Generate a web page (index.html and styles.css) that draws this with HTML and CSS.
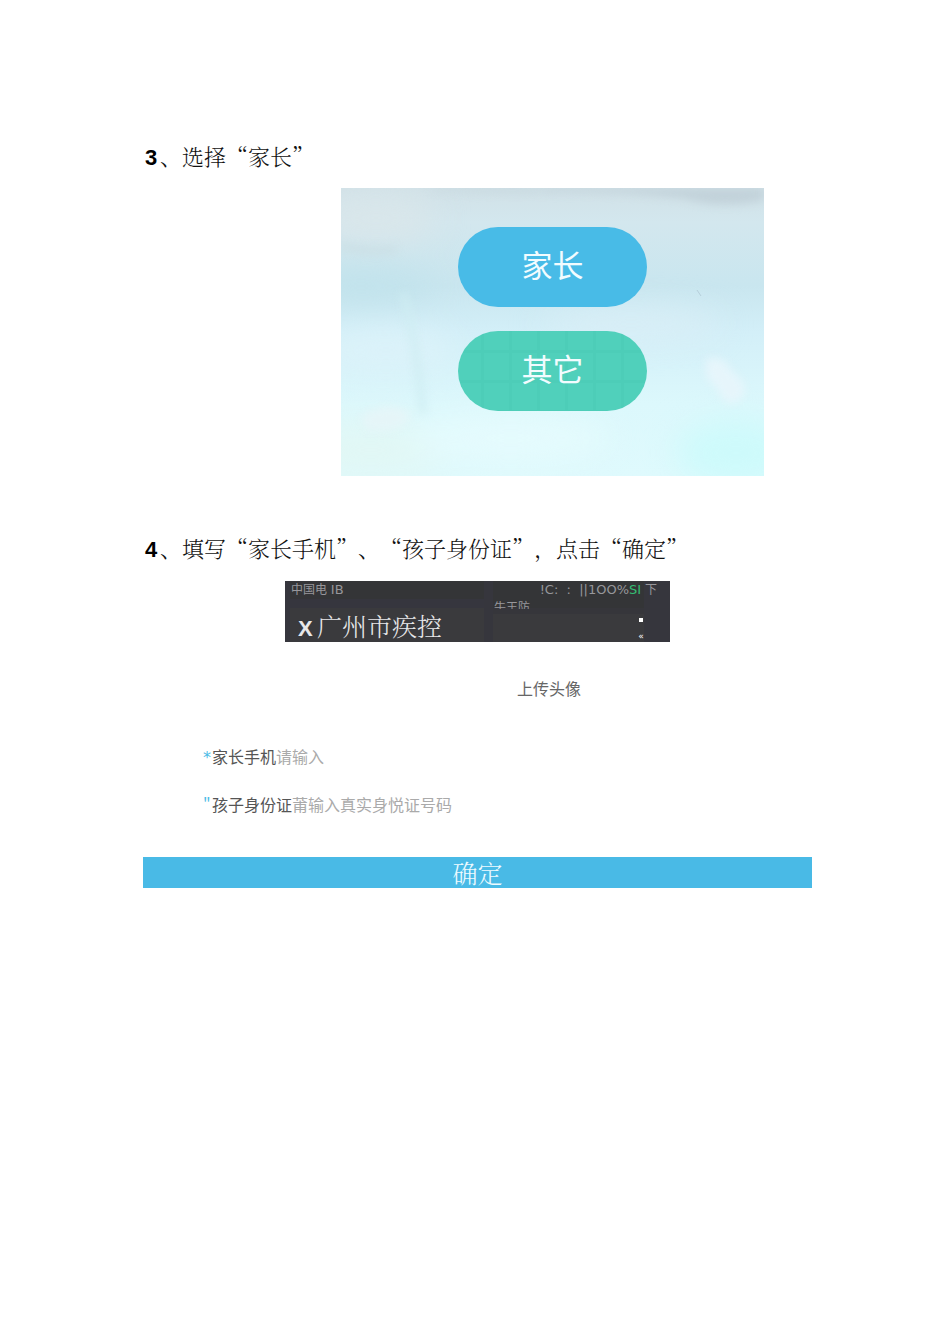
FILE: index.html
```html
<!DOCTYPE html>
<html lang="zh-CN">
<head>
<meta charset="utf-8">
<meta name="viewport" content="width=device-width, initial-scale=1">
<title>填写家长信息</title>
<link rel="stylesheet" href="styles.css">
</head>
<body>
<main class="page">
  <section class="step">
    <h2 class="step-title"><b class="num">3</b>、选择“家长”</h2>
    <div class="roles">
      <svg class="sky" viewBox="0 0 423 288" preserveAspectRatio="none" aria-hidden="true">
        <defs>
          <linearGradient id="air" x1="0" y1="0" x2="0" y2="1">
            <stop offset="0" stop-color="#d1e1e7"/>
            <stop offset=".12" stop-color="#d3e7ee"/>
            <stop offset=".34" stop-color="#c9e6ef"/>
            <stop offset=".5" stop-color="#d3eff8"/>
            <stop offset=".75" stop-color="#dcf8fc"/>
            <stop offset="1" stop-color="#dffafd"/>
          </linearGradient>
          <filter id="soft" x="-50%" y="-50%" width="200%" height="200%" color-interpolation-filters="sRGB"><feGaussianBlur stdDeviation="16"/></filter>
          <filter id="mist" x="-50%" y="-50%" width="200%" height="200%" color-interpolation-filters="sRGB"><feGaussianBlur stdDeviation="4"/></filter>
        </defs>
        <rect width="423" height="288" fill="url(#air)"/>
        <g filter="url(#soft)">
          <ellipse cx="35" cy="30" rx="60" ry="24" fill="#d9e6ea"/>
          <ellipse cx="20" cy="98" rx="75" ry="16" fill="#c0e2eb"/>
          <ellipse cx="45" cy="162" rx="70" ry="20" fill="#dcf2f9"/>
          <ellipse cx="30" cy="262" rx="80" ry="30" fill="#e1f7f5"/>
          <ellipse cx="170" cy="250" rx="100" ry="24" fill="#e5fbfd"/>
          <ellipse cx="290" cy="136" rx="90" ry="14" fill="#daeef6"/>
          <ellipse cx="395" cy="265" rx="60" ry="34" fill="#cdfafb"/>
        </g>
        <g filter="url(#mist)">
          <path d="M90 0H240V3Q170 7 90 2Z" fill="#c6d7de"/>
          <path d="M205 0H423V12Q380 22 342 10Q280 3 205 4Z" fill="#c2d2da"/>
          <path d="M62 105Q75 150 82 225" fill="none" stroke="#cfedf2" stroke-width="6"/>
          <path d="M0 58Q38 66 55 60" fill="none" stroke="#c9dde3" stroke-width="5"/>
          <path d="M366 170Q385 168 390 183Q410 197 401 210Q386 224 376 200Q361 190 366 170Z" fill="#e6f5fb"/>
          <path d="M20 228Q55 209 70 229Q55 249 25 241Z" fill="#e5f5f8"/>
        </g>
        <path d="M356 102l4 6" stroke="#b6cfda" stroke-width="1"/>
      </svg>
      <button class="role parent" type="button">家长</button>
      <button class="role other" type="button">其它</button>
    </div>
  </section>

  <section class="step">
    <h2 class="step-title"><b class="num">4</b>、填写“家长手机”、“孩子身份证”，点击“确定”</h2>
    <header class="phone-bar">
      <div class="bar-left">
        <span class="carrier">中国电 <span class="latin">IB</span></span>
        <span class="bar-title"><b class="close">X</b>广州市疾控</span>
      </div>
      <div class="bar-right">
        <div class="status"><span class="signal">!C:&nbsp; :&nbsp; ||1OO%<span class="battery">SI</span></span> 下</div>
        <div class="clipped">牛王防</div>
        <div class="menu"><span class="dot"></span><span class="chevron">«</span></div>
      </div>
    </header>

    <form class="form">
      <button class="upload" type="button">上传头像</button>
      <div class="field">
        <label for="phone"><span class="mark star">*</span>家长手机</label>
        <input id="phone" type="tel" placeholder="请输入">
      </div>
      <div class="field">
        <label for="child-id"><span class="mark">"</span>孩子身份证</label>
        <input id="child-id" type="text" placeholder="莆输入真实身悦证号码">
      </div>
      <button class="submit" type="submit">确定</button>
    </form>
  </section>
</main>
</body>
</html>
```
FILE: styles.css
```css
* {
  box-sizing: border-box;
}

body {
  margin: 0;
  background: #fff;
  color: #111;
  font-family: "Liberation Sans", "Noto Sans CJK SC", sans-serif;
}

button,
input {
  margin: 0;
  padding: 0;
  border: 0;
  background: none;
  font: inherit;
}

.page {
  width: 100%;
  padding: 140px 138px 140px 143px;
}

.step-title {
  margin: 0;
  font-family: "Noto Serif CJK SC", "Noto Sans CJK SC", serif;
  font-size: 22px;
  font-weight: 300;
  line-height: 32px;
  text-spacing-trim: space-all;
}

.num {
  display: inline-block;
  width: 17px;
  padding-left: 2px;
  color: #000;
  font-family: "Liberation Sans", sans-serif;
  font-weight: 700;
}

.roles {
  position: relative;
  display: flex;
  flex-direction: column;
  align-items: center;
  gap: 24px;
  width: 423px;
  max-width: 100%;
  margin: 14px 48px 56px auto;
  padding: 39px 0 65px;
}

.sky {
  position: absolute;
  inset: 0;
  width: 100%;
  height: 100%;
}

.role {
  position: relative;
  width: 189px;
  height: 80px;
  padding-bottom: 6px;
  border-radius: 40px;
  color: #f2fcff;
  font-family: "Noto Sans CJK SC", sans-serif;
  font-size: 31px;
  line-height: 40px;
}

.parent {
  background: #48bbe7;
}

.other {
  background-color: #50d0bb;
  background-image:
    linear-gradient(90deg, #4dcdb8 3px, transparent 3px),
    linear-gradient(#4dcdb8 3px, transparent 3px);
  background-position: 23px 19px;
  background-size: 28px 30px;
}

.phone-bar {
  display: flex;
  width: 385px;
  max-width: 100%;
  height: 61px;
  margin: 15px auto 0 142px;
  background: #36363d;
  color: #97979b;
  font-family: "DejaVu Sans", "Noto Sans CJK SC", sans-serif;
  font-size: 12px;
  line-height: 18px;
}

.bar-left {
  display: flex;
  flex-direction: column;
  width: 204px;
  padding-left: 6px;
  background: linear-gradient(#343537 18px, #36363e 18px 27px, #3a3a3d 27px) 5px 0 / 194px 100% no-repeat;
}

.latin,
.signal {
  font-size: 13px;
}

.bar-title {
  padding: 8px 0 0 7px;
  color: #e8e8ea;
  font-family: "Noto Serif CJK SC", "Noto Sans CJK SC", serif;
  font-size: 25px;
  font-weight: 300;
  line-height: 36px;
}

.close {
  display: inline-block;
  width: 19px;
  font-family: "Liberation Sans", sans-serif;
  font-size: 22px;
  font-weight: 700;
}

.bar-right {
  flex: 1;
  padding-left: 5px;
  background: linear-gradient(#343537 27px, #36363b 27px 33px, #3a3a3d 33px) 4px 0 / 151px 100% no-repeat;
}

.status {
  height: 18px;
  padding-right: 13px;
  text-align: right;
  white-space: nowrap;
}

.battery {
  color: #35bd72;
}

.clipped {
  height: 10px;
  overflow: hidden;
}

.menu {
  display: flex;
  flex-direction: column;
  align-items: center;
  gap: 8px;
  width: 12px;
  margin: 9px 0 0 141px;
  color: #fff;
  font-size: 9px;
  line-height: 12px;
}

.dot {
  width: 4px;
  height: 4px;
  background: #fff;
}

.form {
  display: flex;
  flex-direction: column;
  color: #555;
  font-family: "Noto Sans CJK SC", sans-serif;
  font-size: 16px;
  line-height: 24px;
}

.upload {
  align-self: center;
  margin: 34px 0 44px 143px;
  color: #666;
}

.field {
  display: flex;
  height: 24px;
  margin-bottom: 24px;
  padding-left: 60px;
}

.mark {
  display: inline-block;
  width: 9px;
  color: #4cbbe5;
}

.star {
  font-family: "DejaVu Sans", sans-serif;
}

.field input {
  flex: 1;
  min-width: 0;
  height: 24px;
  color: #555;
}

.field input::placeholder {
  color: #aaa;
  opacity: 1;
}

.submit {
  height: 31px;
  margin-top: 17px;
  background: #49bae6;
  color: #eefaff;
  font-family: "Noto Serif CJK SC", "Noto Sans CJK SC", serif;
  font-size: 25px;
  font-weight: 300;
  line-height: 31px;
}
```
